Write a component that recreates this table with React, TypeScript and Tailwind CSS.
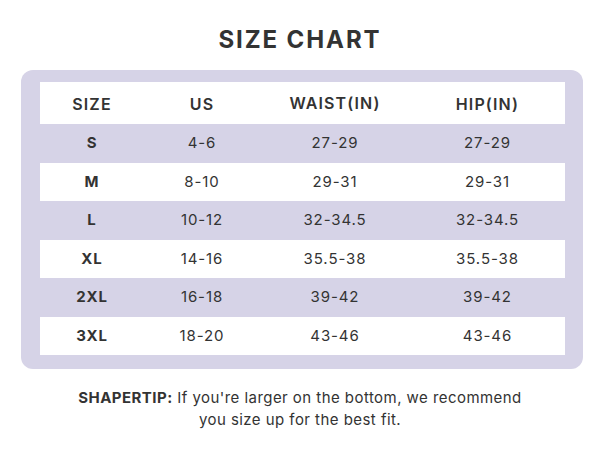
import React from 'react';

const ROWS = [
    {size: 'S', us: '4-6', waist: '27-29', hip: '27-29'},
    {size: 'M', us: '8-10', waist: '29-31', hip: '29-31'},
    {size: 'L', us: '10-12', waist: '32-34.5', hip: '32-34.5'},
    {size: 'XL', us: '14-16', waist: '35.5-38', hip: '35.5-38'},
    {size: '2XL', us: '16-18', waist: '39-42', hip: '39-42'},
    {size: '3XL', us: '18-20', waist: '43-46', hip: '43-46'},
];

const COLS = 'grid grid-cols-[104px_116px_150px_155px]';

export default function App() {
    return (
        <div className="w-[600px] h-[450px] bg-white text-[#333] font-['Inter',sans-serif] flex flex-col items-center">
            <h1 className="mt-[25px] text-[24px] leading-[30px] font-bold tracking-[1.9px] text-[#333]">SIZE CHART</h1>

            <div className="mt-[15px] w-[562px] ml-[4px] bg-[#d6d3e7] rounded-[12px] pt-[12px] pb-[14px] pl-[19px] pr-[18px]">
                <div className="bg-white">
                    {/* Header */}
                    <div className={`${COLS} h-[42px] items-center text-[16px] font-semibold tracking-[1.1px] text-[#333]`}>
                        <div className="text-center pt-[2px]">SIZE</div>
                        <div className="text-center pt-[2px]">US</div>
                        <div className="text-center">WAIST(IN)</div>
                        <div className="text-center pt-[2px]">HIP(IN)</div>
                    </div>
                    {ROWS.map((r, i) => (
                        <div
                            key={r.size}
                            className={`${COLS} h-[38.5px] items-center text-[15px] tracking-[0.9px] ${i % 2 === 0 ? 'bg-[#d6d3e7]' : 'bg-white'}`}
                        >
                            <div className="text-center font-bold">{r.size}</div>
                            <div className="text-center">{r.us}</div>
                            <div className="text-center">{r.waist}</div>
                            <div className="text-center">{r.hip}</div>
                        </div>
                    ))}
                </div>
            </div>

            <p className="mt-[18px] w-[456px] text-center text-[15px] leading-[22px] tracking-[0.45px] text-[#333]">
                <span className="font-bold">SHAPERTIP:</span> If you're larger on the bottom, we recommend you size up
                for the best fit.
            </p>
        </div>
    );
}
